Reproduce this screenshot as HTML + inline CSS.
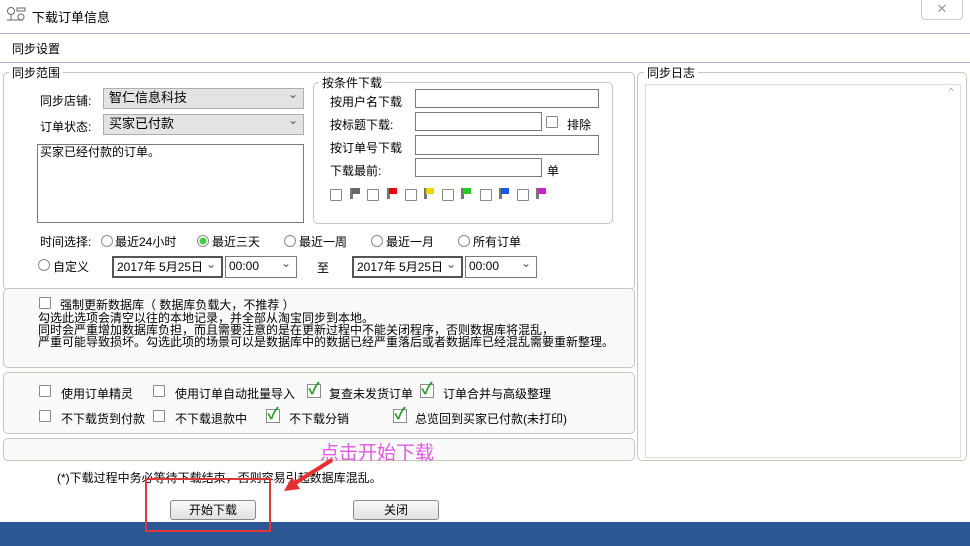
<!DOCTYPE html>
<html><head><meta charset="utf-8"><style>
*{margin:0;padding:0;box-sizing:border-box}
body{width:970px;height:546px;position:relative;overflow:hidden;background:#fff;font-family:"Liberation Sans","Noto Sans CJK SC","WenQuanYi Zen Hei",sans-serif;font-size:12px;color:#000}
.a{position:absolute;white-space:nowrap}
.grp{position:absolute;border:1px solid #c9c5bd;border-radius:5px}
.lg{position:absolute;background:#fff;padding:0 3px;line-height:14px}
.in{position:absolute;background:#fff;border:1px solid #7a7a7a}
.sel{position:absolute;background:#e3e3e3;border:1px solid #adadad;padding-left:5px;line-height:17px;font-size:13px}
.sel:after,.dd:after{content:"⌄";position:absolute;right:5px;top:-3px;color:#555;font-size:12px}
.dd{position:absolute;background:#fff;border:1px solid #7a7a7a;padding-left:3px;line-height:19px;font-size:12px}
.cb{position:absolute;width:12px;height:12px;border:1px solid #8a8a8a;background:#fff;border-radius:1px}
.ck{position:absolute;width:14px;height:14px;border:1px solid #8a8a8a;background:#fff;color:#2a9a2a;font-weight:bold;font-size:16px;line-height:10px;text-align:center}
.rd{position:absolute;width:12px;height:12px;border:1px solid #8a8a8a;border-radius:50%;background:#fff}
.fl{position:absolute;width:3px;height:11px;background:#777}
.fl i{position:absolute;left:2px;top:0;width:8px;height:6px}
.btn{position:absolute;border:1px solid #8a8a8a;border-radius:3px;background:linear-gradient(#fafafa,#e0e0e0);text-align:center;line-height:18px}
</style></head><body>
<div class="a" style="left:0;top:522px;width:970px;height:24px;background:#2c5795"></div>
<svg class="a" style="left:6px;top:6px" width="22" height="18"><circle cx="5" cy="5" r="3.5" fill="none" stroke="#666"/><line x1="5" y1="9" x2="5" y2="14" stroke="#666"/><line x1="1" y1="14" x2="17" y2="14" stroke="#666"/><rect x="11" y="2" width="8" height="3" fill="none" stroke="#666"/><circle cx="15" cy="11" r="3" fill="none" stroke="#666"/></svg>
<div class="a" style="left:32px;top:7px;font-size:13px">下载订单信息</div>
<div class="a" style="left:921px;top:0;width:42px;height:20px;border:1px solid #ccc;border-top:none;border-radius:0 0 4px 4px;color:#999;text-align:center;line-height:18px;font-size:13px">✕</div>
<div class="a" style="left:0;top:33px;width:970px;height:30px;border-top:1px solid #a9b8d6;border-bottom:1px solid #a9b8d6"></div>
<div class="a" style="left:12px;top:40px;font-size:12px">同步设置</div>
<div class="grp" style="left:3px;top:72px;width:632px;height:218px"></div>
<div class="lg" style="left:9px;top:66px">同步范围</div>
<div class="a" style="left:40px;top:92px">同步店铺:</div>
<div class="sel" style="left:103px;top:88px;width:201px;height:21px">智仁信息科技</div>
<div class="a" style="left:40px;top:118px">订单状态:</div>
<div class="sel" style="left:103px;top:114px;width:201px;height:21px">买家已付款</div>
<div class="in" style="left:37px;top:144px;width:267px;height:79px;padding:0 2px;line-height:14px">买家已经付款的订单。</div>
<div class="grp" style="left:313px;top:82px;width:300px;height:142px"></div>
<div class="lg" style="left:319px;top:76px">按条件下载</div>
<div class="a" style="left:330px;top:93px">按用户名下载</div>
<div class="in" style="left:415px;top:89px;width:184px;height:19px"></div>
<div class="a" style="left:330px;top:116px">按标题下载:</div>
<div class="in" style="left:415px;top:112px;width:127px;height:19px"></div>
<div class="cb" style="left:546px;top:116px"></div><div class="a" style="left:567px;top:116px">排除</div>
<div class="a" style="left:330px;top:139px">按订单号下载</div>
<div class="in" style="left:415px;top:135px;width:184px;height:20px"></div>
<div class="a" style="left:330px;top:162px">下载最前:</div>
<div class="in" style="left:415px;top:158px;width:127px;height:19px"></div>
<div class="a" style="left:547px;top:162px">单</div>
<div class="cb" style="left:330px;top:189px"></div><div class="fl" style="left:350px;top:188px"><i style="background:#666"></i></div>
<div class="cb" style="left:367px;top:189px"></div><div class="fl" style="left:387px;top:188px"><i style="background:#e00"></i></div>
<div class="cb" style="left:405px;top:189px"></div><div class="fl" style="left:424px;top:188px"><i style="background:#e8d800"></i></div>
<div class="cb" style="left:442px;top:189px"></div><div class="fl" style="left:461px;top:188px"><i style="background:#2c2"></i></div>
<div class="cb" style="left:480px;top:189px"></div><div class="fl" style="left:499px;top:188px"><i style="background:#1a5adf"></i></div>
<div class="cb" style="left:517px;top:189px"></div><div class="fl" style="left:536px;top:188px"><i style="background:#c2c"></i></div>
<div class="a" style="left:40px;top:233px">时间选择:</div>
<div class="rd" style="left:101px;top:235px"></div><div class="a" style="left:115px;top:233px">最近24小时</div>
<div class="rd" style="left:197px;top:235px;background:radial-gradient(#4c4 0 3px,#fff 4px)"></div><div class="a" style="left:212px;top:233px">最近三天</div>
<div class="rd" style="left:284px;top:235px"></div><div class="a" style="left:299px;top:233px">最近一周</div>
<div class="rd" style="left:371px;top:235px"></div><div class="a" style="left:386px;top:233px">最近一月</div>
<div class="rd" style="left:458px;top:235px"></div><div class="a" style="left:473px;top:233px">所有订单</div>
<div class="rd" style="left:38px;top:259px"></div><div class="a" style="left:53px;top:258px">自定义</div>
<div class="dd" style="left:112px;top:256px;width:111px;height:22px;border:2px solid #555">2017年 5月25日</div>
<div class="dd" style="left:225px;top:256px;width:72px;height:22px">00:00</div>
<div class="a" style="left:317px;top:259px">至</div>
<div class="dd" style="left:352px;top:256px;width:111px;height:22px;border:2px solid #555">2017年 5月25日</div>
<div class="dd" style="left:465px;top:256px;width:72px;height:22px">00:00</div>
<div class="grp" style="left:3px;top:288px;width:632px;height:80px;background:#fafafa"></div>
<div class="cb" style="left:39px;top:297px"></div>
<div class="a" style="left:60px;top:296px">强制更新数据库（ 数据库负载大，不推荐 ）</div>
<div class="a" style="left:38px;top:312px;line-height:12px">勾选此选项会清空以往的本地记录，并全部从淘宝同步到本地。<br>同时会严重增加数据库负担，而且需要注意的是在更新过程中不能关闭程序，否则数据库将混乱，<br>严重可能导致损坏。勾选此项的场景可以是数据库中的数据已经严重落后或者数据库已经混乱需要重新整理。</div>
<div class="grp" style="left:3px;top:372px;width:632px;height:62px;background:#fafafa"></div>
<div class="cb" style="left:39px;top:385px"></div><div class="a" style="left:61px;top:385px">使用订单精灵</div>
<div class="cb" style="left:153px;top:385px"></div><div class="a" style="left:175px;top:385px">使用订单自动批量导入</div>
<div class="ck" style="left:307px;top:384px">✓</div><div class="a" style="left:329px;top:385px">复查未发货订单</div>
<div class="ck" style="left:420px;top:384px">✓</div><div class="a" style="left:443px;top:385px">订单合并与高级整理</div>
<div class="cb" style="left:39px;top:410px"></div><div class="a" style="left:61px;top:410px">不下载货到付款</div>
<div class="cb" style="left:153px;top:410px"></div><div class="a" style="left:175px;top:410px">不下载退款中</div>
<div class="ck" style="left:266px;top:409px">✓</div><div class="a" style="left:289px;top:410px">不下载分销</div>
<div class="ck" style="left:393px;top:409px">✓</div><div class="a" style="left:415px;top:410px">总览回到买家已付款(未打印)</div>
<div class="grp" style="left:3px;top:438px;width:632px;height:23px;background:#fafafa"></div>
<div class="grp" style="left:637px;top:72px;width:330px;height:389px"></div>
<div class="lg" style="left:644px;top:66px">同步日志</div>
<div class="a" style="left:645px;top:84px;width:316px;height:374px;border:1px solid #ddd;background:#fff"></div>
<div class="a" style="left:949px;top:86px;color:#999;font-size:9px">^</div>
<div class="a" style="left:57px;top:469px">(*)下载过程中务必等待下载结束，否则容易引起数据库混乱。</div>
<div class="btn" style="left:170px;top:500px;width:86px;height:20px">开始下载</div>
<div class="btn" style="left:353px;top:500px;width:86px;height:20px">关闭</div>
<div class="a" style="left:145px;top:478px;width:126px;height:54px;border:2px solid #e03838"></div>
<div class="a" style="left:320px;top:438px;font-size:19px;color:#e05ae0">点击开始下载</div>
<svg class="a" style="left:280px;top:455px" width="60" height="45"><line x1="52" y1="5" x2="12" y2="30" stroke="#e53030" stroke-width="4"/><polygon points="4,36 12,22 20,34" fill="#e53030"/></svg>
</body></html>
